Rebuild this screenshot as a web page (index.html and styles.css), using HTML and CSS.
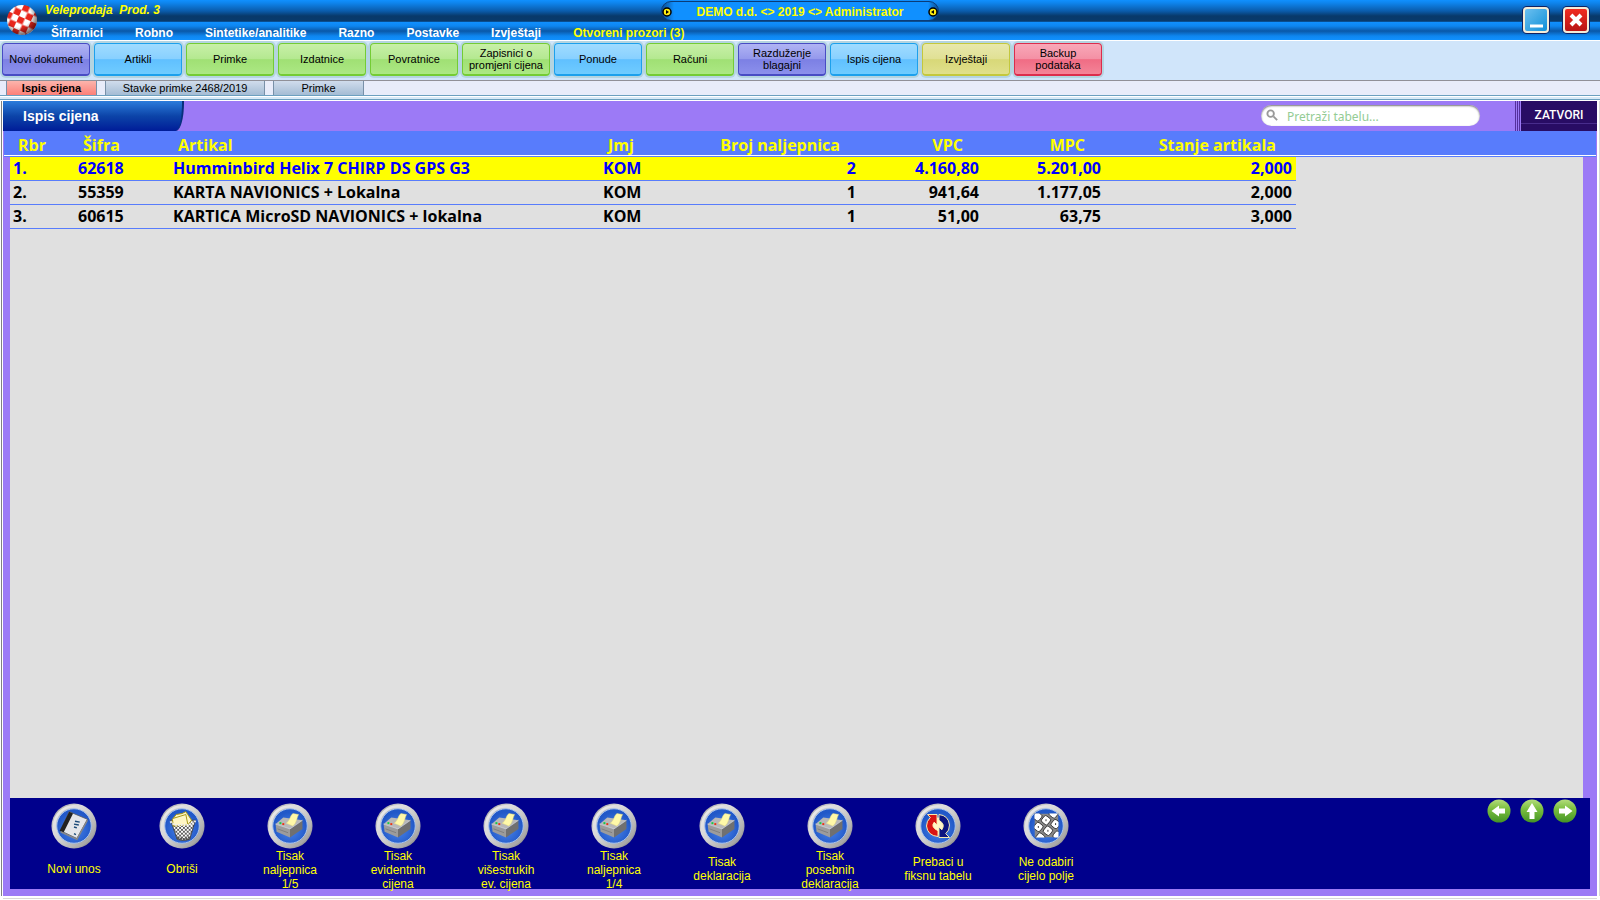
FILE: index.html
```
<!DOCTYPE html>
<html lang="hr">

	<head>
		<meta charset="UTF-8">
		<title>Veleprodaja</title>
		<link rel="stylesheet" href="styles.css">
	</head>

	<body>
		<!-- icons used more than once -->
		<svg class="defs" aria-hidden="true">
			<defs>
				<linearGradient id="ring" x1="0" y1="0" x2="1" y2="1">
					<stop offset="0" stop-color="#8f8f8f"/>
					<stop offset=".35" stop-color="#dedede"/>
					<stop offset=".7" stop-color="#b4b4b4"/>
					<stop offset="1" stop-color="#7c7c7c"/>
				</linearGradient>
				<linearGradient id="rim" x1="0" y1="0" x2="1" y2="1">
					<stop offset="0" stop-color="#f0f0f0"/>
					<stop offset=".5" stop-color="#d0d0d0"/>
					<stop offset="1" stop-color="#989898"/>
				</linearGradient>
				<radialGradient id="disc" cx=".5" cy=".6">
					<stop offset="0" stop-color="#4c86ea"/>
					<stop offset="1" stop-color="#2158c8"/>
				</radialGradient>
				<radialGradient id="shade" cx=".4" cy=".35" r=".65">
					<stop offset=".6" stop-color="#000" stop-opacity="0"/>
					<stop offset="1" stop-color="#200" stop-opacity=".6"/>
				</radialGradient>
				<linearGradient id="green" x1="0" y1="0" x2="0" y2="1">
					<stop offset="0" stop-color="#b4dc7c"/>
					<stop offset=".4" stop-color="#7cc040"/>
					<stop offset="1" stop-color="#449424"/>
				</linearGradient>
				<pattern id="mesh" width="4" height="4" patternUnits="userSpaceOnUse">
					<rect width="4" height="4" fill="#fff"/>
					<path d="M0 0l4 4M4 0l-4 4" stroke="#333" stroke-width=".8"/>
				</pattern>
				<pattern id="checks" width="13" height="13" patternUnits="userSpaceOnUse" patternTransform="translate(13 12) rotate(24)">
					<rect width="13" height="13" fill="#fff"/>
					<path d="M0 0h6.500v6.500H0zM6.500 6.500H13V13H6.500z" fill="#e8261c"/>
				</pattern>
				<clipPath id="keys"><rect x="12" y="11" width="25" height="25"/></clipPath>
				<g id="plate">
					<circle cx="24" cy="24" r="23.500" fill="url(#ring)"/>
					<circle cx="24" cy="24" r="20.500" fill="none" stroke="url(#rim)" stroke-width="3"/>
					<circle cx="24" cy="24" r="18" fill="url(#disc)" stroke="#a8c4f0"/>
				</g>
				<g id="printer">
					<use href="#plate"/>
					<path d="M9 22l8-7 20 3-13 9z" fill="#b8b8b8"/>
					<path d="M9 22l15 5v9L10 30z" fill="#9c9c9c"/>
					<path d="M24 27l13-9v9l-13 9z" fill="#707070"/>
					<path d="M9 22l15 5 13-9" fill="none" stroke="#d8d8d8" stroke-width=".8"/>
					<path d="M11 27l11 4" stroke="#777" stroke-width=".8"/>
					<path d="M20 21c4-2 4-8 7-10l6 1c-2 3-2 9-6 12z" fill="#fff9a8" stroke="#e4dc80" stroke-width=".5"/>
					<path d="M13 21h2" stroke="#1c4" stroke-width="2"/>
					<path d="M16 22h2" stroke="#e31" stroke-width="2"/>
				</g>
			</defs>
		</svg>

		<header class="topbar">
			<svg class="logo" viewBox="0 0 32 32">
				<circle cx="16" cy="16" r="15" fill="url(#checks)"/>
				<circle cx="16" cy="16" r="15" fill="url(#shade)"/>
			</svg>
			<div class="brand">Veleprodaja&nbsp; Prod. 3</div>
			<div class="company">
				<svg class="knob" viewBox="0 0 10 10"><circle cx="5" cy="5" r="4" fill="#fe1" stroke="#000" stroke-width="1.500"/><path d="M4 3l3 2-3 2z"/></svg>
				<span>DEMO d.d. &lt;&gt; 2019 &lt;&gt; Administrator</span>
				<svg class="knob" viewBox="0 0 10 10"><circle cx="5" cy="5" r="4" fill="#fe1" stroke="#000" stroke-width="1.500"/><path d="M6 3L3 5l3 2z"/></svg>
			</div>
			<nav class="menu">
				<a href="#">Šifrarnici</a>
				<a href="#">Robno</a>
				<a href="#">Sintetike/analitike</a>
				<a href="#">Razno</a>
				<a href="#">Postavke</a>
				<a href="#">Izvještaji</a>
				<a href="#" class="opened">Otvoreni prozori (3)</a>
			</nav>
			<div class="window-buttons">
				<button class="win minimize" aria-label="Minimize"><svg viewBox="0 0 20 20"><path d="M4 16h13" stroke="#fff" stroke-width="3"/></svg></button>
				<button class="win close" aria-label="Close"><svg viewBox="0 0 20 20"><path d="M5 5l10 10M15 5L5 15" stroke="#fff" stroke-width="4"/></svg></button>
			</div>
		</header>

		<div class="toolbar">
			<button class="tool violet">Novi dokument</button>
			<button class="tool blue">Artikli</button>
			<button class="tool green">Primke</button>
			<button class="tool green">Izdatnice</button>
			<button class="tool green">Povratnice</button>
			<button class="tool green">Zapisnici o<br>promjeni cijena</button>
			<button class="tool blue">Ponude</button>
			<button class="tool green">Računi</button>
			<button class="tool violet">Razduženje<br>blagajni</button>
			<button class="tool blue">Ispis cijena</button>
			<button class="tool yellow">Izvještaji</button>
			<button class="tool red">Backup<br>podataka</button>
		</div>

		<div class="tabs">
			<button class="tab active">Ispis cijena</button>
			<button class="tab wide">Stavke primke 2468/2019</button>
			<button class="tab">Primke</button>
		</div>

		<main class="panel">
			<div class="panel-head">
				<h1>Ispis cijena</h1>
				<label class="search">
					<svg viewBox="0 0 14 14" aria-hidden="true"><circle cx="5" cy="5" r="3.500" fill="none" stroke="#999" stroke-width="2"/><path d="M8 8l4 4" stroke="#999" stroke-width="2"/></svg>
					<input type="text" placeholder="Pretraži tabelu..." aria-label="Pretraži tabelu">
				</label>
				<button class="exit">ZATVORI</button>
			</div>

			<div class="grid">
				<table>
					<colgroup>
						<col class="c-rbr"><col class="c-sifra"><col class="c-artikal"><col class="c-jmj">
						<col class="c-broj"><col class="c-vpc"><col class="c-mpc"><col class="c-stanje">
					</colgroup>
					<thead>
						<tr>
							<th>Rbr</th>
							<th>Šifra</th>
							<th>Artikal</th>
							<th>Jmj</th>
							<th class="num">Broj naljepnica</th>
							<th class="num">VPC</th>
							<th class="num">MPC</th>
							<th class="num">Stanje artikala</th>
						</tr>
					</thead>
					<tbody>
						<tr class="selected">
							<td>1.</td>
							<td>62618</td>
							<td>Humminbird Helix 7 CHIRP DS GPS G3</td>
							<td>KOM</td>
							<td class="num">2</td>
							<td class="num">4.160,80</td>
							<td class="num">5.201,00</td>
							<td class="num">2,000</td>
						</tr>
						<tr>
							<td>2.</td>
							<td>55359</td>
							<td>KARTA NAVIONICS + Lokalna</td>
							<td>KOM</td>
							<td class="num">1</td>
							<td class="num">941,64</td>
							<td class="num">1.177,05</td>
							<td class="num">2,000</td>
						</tr>
						<tr>
							<td>3.</td>
							<td>60615</td>
							<td>KARTICA MicroSD NAVIONICS + lokalna</td>
							<td>KOM</td>
							<td class="num">1</td>
							<td class="num">51,00</td>
							<td class="num">63,75</td>
							<td class="num">3,000</td>
						</tr>
					</tbody>
				</table>
			</div>

			<footer class="actions">
				<button class="action">
					<svg viewBox="0 0 48 48"><use href="#plate"/><path d="M19 9l19 8-11 20-17-8z" fill="#e4e6ea" stroke="#555" stroke-width=".8"/><path d="M19 9l4 2-10 20-4-2z" fill="#222"/><path d="M10 30l17 8 11-20" fill="none" stroke="#888" stroke-width="1.500"/><path d="M25 19l5 1M24 22l5 1M24 25l3 1M24 32l2 1" stroke="#1a4a78" stroke-width="1.500"/></svg>
					<span>Novi unos</span>
				</button>
				<button class="action">
					<svg viewBox="0 0 48 48"><use href="#plate"/><path d="M12 18h26l-6 20q-7 2-13 0z" fill="url(#mesh)" stroke="#333" stroke-width=".8"/><path d="M14 17l4-5 6-1 4-2 2 3 4 6-4 5-15 1z" fill="#fff6c4" stroke="#a69410"/><path d="M15 16l13-4 2 10" fill="none" stroke="#a69410"/><path d="M12 19q2 4 8 4h10q7-1 8-5" fill="none" stroke="#eee" stroke-width="2" stroke-dasharray="2 1"/><path d="M19 36q7 4 13 0" stroke="#555" stroke-width="3" fill="none" stroke-dasharray="2 1"/></svg>
					<span>Obriši</span>
				</button>
				<button class="action">
					<svg viewBox="0 0 48 48"><use href="#printer"/></svg>
					<span>Tisak<br>naljepnica<br>1/5</span>
				</button>
				<button class="action">
					<svg viewBox="0 0 48 48"><use href="#printer"/></svg>
					<span>Tisak<br>evidentnih<br>cijena</span>
				</button>
				<button class="action">
					<svg viewBox="0 0 48 48"><use href="#printer"/></svg>
					<span>Tisak<br>višestrukih<br>ev. cijena</span>
				</button>
				<button class="action">
					<svg viewBox="0 0 48 48"><use href="#printer"/></svg>
					<span>Tisak<br>naljepnica<br>1/4</span>
				</button>
				<button class="action">
					<svg viewBox="0 0 48 48"><use href="#printer"/></svg>
					<span>Tisak<br>deklaracija</span>
				</button>
				<button class="action">
					<svg viewBox="0 0 48 48"><use href="#printer"/></svg>
					<span>Tisak<br>posebnih<br>deklaracija</span>
				</button>
				<button class="action">
					<svg viewBox="0 0 48 48"><use href="#plate"/><circle cx="24" cy="24" r="9" fill="#fff6c8"/><path d="M13 12h10v11l-3-3q-4 5 4 9v6q-11-1-12-11 0-5 4-9z" fill="#d81414" stroke="#fff0b0"/><path d="M25 12q10 1 11 11 0 6-4 9l4 4H25V25l3 3q4-6-3-10z" fill="#0c1480" stroke="#fff0b0"/></svg>
					<span>Prebaci u<br>fiksnu tabelu</span>
				</button>
				<button class="action">
					<svg viewBox="0 0 48 48"><use href="#plate"/><g clip-path="url(#keys)"><rect x="12" y="11" width="25" height="25" fill="#888"/><g fill="#fff" stroke="#222" stroke-width=".8"><rect x="11" y="10" width="8" height="8" rx="2" transform="rotate(38 15 14)"/><rect x="20" y="14" width="8" height="8" rx="2" transform="rotate(38 24 18)"/><rect x="28" y="7" width="8" height="8" rx="2" transform="rotate(38 32 11)"/><rect x="12" y="21" width="8" height="8" rx="2" transform="rotate(38 16 25)"/><rect x="22" y="25" width="8" height="8" rx="2" transform="rotate(38 26 29)"/><rect x="30" y="18" width="8" height="8" rx="2" transform="rotate(38 34 22)"/><rect x="32" y="30" width="8" height="8" rx="2" transform="rotate(38 36 34)"/><rect x="14" y="32" width="8" height="8" rx="2" transform="rotate(38 18 36)"/></g><path d="M24 17v2M16 24v2M26 28v2M34 21v2" stroke="#333"/></g></svg>
					<span>Ne odabiri<br>cijelo polje</span>
				</button>
				<div class="arrows">
					<button class="arrow" aria-label="Lijevo"><svg viewBox="0 0 24 24"><circle cx="12" cy="12" r="11.500" fill="url(#green)"/><path d="M4.500 12L12 6.500v3h6v5h-6v3z" fill="#fff"/></svg></button>
					<button class="arrow" aria-label="Gore"><svg viewBox="0 0 24 24"><circle cx="12" cy="12" r="11.500" fill="url(#green)"/><path d="M12 4l5.500 9h-3v7h-5v-7h-3z" fill="#fff"/></svg></button>
					<button class="arrow" aria-label="Desno"><svg viewBox="0 0 24 24"><circle cx="12" cy="12" r="11.500" fill="url(#green)"/><path d="M19.500 12L12 6.500v3H6v5h6v3z" fill="#fff"/></svg></button>
				</div>
			</footer>
		</main>
	</body>

</html>
```
FILE: styles.css
```
* {
	margin: 0;
	padding: 0;
	box-sizing: border-box;
}

body {
	display: flex;
	flex-direction: column;
	height: 100vh;
	background: #fff;
	font: 12px "Liberation Sans", Arial, sans-serif;
	overflow: hidden;
}

button {
	border: none;
	background: none;
	font: inherit;
}

svg {
	display: block;
}

.defs {
	position: absolute;
	width: 0;
	height: 0;
}

/* title bar + menu */
.topbar {
	display: grid;
	grid-template-columns: 1fr 278px 1fr;
	grid-template-rows: 22px 18px;
	flex: none;
	background:
		linear-gradient(#1090ff, #0e84ec 3px, #0a5cac 11px, #08396a 16px, #083a6c 21px, #0c60b0) 0 0 / 100% 22px no-repeat,
		linear-gradient(#1090ff, #0e86f0 4px, #0a58a8 9px, #0e86f0 14px, #1090ff) 0 22px / 100% 18px no-repeat;
	font-weight: bold;
}

.logo {
	grid-area: 1 / 1 / 3 / 2;
	width: 32px;
	height: 32px;
	margin: 4px 6px;
}

.brand {
	grid-area: 1 / 1;
	padding: 3px 0 0 45px;
	color: #ff0;
	font-style: italic;
	line-height: 14px;
}

.company {
	grid-area: 1 / 2;
	display: flex;
	align-items: center;
	justify-content: space-between;
	height: 20px;
	margin-top: 1px;
	padding-top: 1px;
	background: linear-gradient(90deg, #0a4c90, #1090ff 12px, #1090ff 266px, #0a4c90);
	border: 1px solid #0a3c78;
	border-radius: 10px;
	color: #ff0;
}

.knob {
	width: 10px;
	height: 10px;
}

.menu {
	grid-area: 2 / 1 / 3 / 4;
	display: flex;
	gap: 32px;
	padding-left: 51px;
	line-height: 22px;
}

.menu a {
	color: #fff;
	text-decoration: none;
}

.menu .opened {
	color: #ff0;
}

.window-buttons {
	grid-area: 1 / 3 / 3 / 4;
	justify-self: end;
	display: flex;
	gap: 14px;
	padding: 7px 11px 0 0;
}

.win {
	width: 26px;
	height: 26px;
	padding: 1px;
	border: 2px solid #f4ecd8;
	border-radius: 4px;
	box-shadow: 0 0 0 1px #102060;
}

.minimize {
	background: linear-gradient(135deg, #6cc0f0, #1090d8);
}

.close {
	background: linear-gradient(#f02c20, #b81414);
}

/* toolbar */
.toolbar {
	display: flex;
	gap: 4px;
	flex: none;
	height: 41px;
	padding: 2px 2px 0;
	background: #d0e5fa;
	border-top: 1px solid #fff;
	border-bottom: 1px solid #909098;
}

.tool {
	width: 88px;
	height: 33px;
	border: 1px solid;
	border-bottom-width: 2px;
	border-radius: 4px;
	box-shadow: 0 0 0 2px #b4d4e0;
	font-size: 11px;
	line-height: 12px;
	white-space: nowrap;
}

.violet {
	background: linear-gradient(#b0b4f4, #9498ec 50%, #7c80e4 52%, #8c90ec);
	border-color: #484cc4;
}

.blue {
	background: linear-gradient(#a0dcff, #88d0ff 50%, #60c0ff 52%, #70ccff);
	border-color: #1ca0ec;
}

.green {
	background: linear-gradient(#c8f0a8, #b4e890 50%, #a0e074 52%, #ace884);
	border-color: #74cc34;
}

.yellow {
	background: linear-gradient(#e8e8ac, #e0e094 50%, #d8d878 52%, #e0e08c);
	border-color: #c4c83c;
}

.red {
	background: linear-gradient(#f8a8b8, #f490a4 50%, #f06c84 52%, #f48498);
	border-color: #dc2c4c;
}

/* open windows */
.tabs {
	display: flex;
	gap: 8px;
	flex: none;
	height: 20px;
	padding: 0 6px 5px;
	background: linear-gradient(#e8ecfa 14px, #6ca0c0 14px, #6ca0c0 15px, #fff 15px, #fff 16px, #d8eaf8 16px, #d8eaf8 18px, #6ca0c0 18px, #6ca0c0 19px, #fff 19px);
}

.tab {
	width: 91px;
	height: 14px;
	border: solid #7890a8;
	border-width: 0 1px;
	background: linear-gradient(#d0dcec, #a4bcd4);
	font-size: 11px;
	line-height: 14px;
}

.tab.wide {
	width: 160px;
}

.tab.active {
	background: linear-gradient(#fcb4ac, #fc8078);
	font-weight: bold;
}

/* window */
.panel {
	display: flex;
	flex-direction: column;
	flex: 1;
	min-height: 0;
	margin: 0 3px 4px;
	padding-bottom: 7px;
	background: #9c7af6;
	box-shadow: -1px 0 #fff, -2px 0 #808080, 2px 0 #fff, 3px 0 #d8d8d8, 0 2px #fff, 0 3px #d8d8d8;
}

.panel-head {
	display: flex;
	flex: none;
	height: 30px;
}

.panel-head h1 {
	width: 181px;
	padding-left: 20px;
	margin-right: auto;
	background: linear-gradient(#2c7cdc, #0c44a8 50%, #001c98);
	border-right: 2px solid #08307c;
	border-radius: 0 0 8px 0 / 0 0 28px 0;
	color: #fff;
	font-size: 14px;
	line-height: 30px;
}

.search {
	display: flex;
	align-items: center;
	gap: 8px;
	width: 219px;
	height: 21px;
	margin: 4px 35px 0 0;
	padding: 0 5px;
	border-radius: 11px;
	background: #fff;
	box-shadow: inset 0 1px 2px #777;
}

.search svg {
	width: 13px;
	height: 13px;
	flex: none;
}

.search input {
	width: 100%;
	padding-top: 2px;
	border: none;
	outline: none;
	background: none;
	font: 12px "Noto Sans", sans-serif;
}

.search input::placeholder {
	color: #94cc94;
	opacity: 1;
}

.exit {
	width: 82px;
	padding: 0 0 3px 6px;
	background:
		linear-gradient(90deg, #54309c 1px, #9c7af6 1px, #9c7af6 2px, #54309c 2px, #54309c 3px, #9c7af6 3px, #9c7af6 4px, #54309c 4px, #54309c 5px, #9c7af6 5px) 0 0 / 6px 100% no-repeat,
		linear-gradient(#280c64 22px, #482c8c 22px, #482c8c 23px, #280c64 23px);
	color: #fff;
	font: 500 12px Roboto, sans-serif;
}

/* header stripe runs over the whole width, the rows sit on the grey field */
.grid {
	flex: 1;
	min-height: 0;
	margin: 0 1px;
	padding-left: 6px;
	background:
		linear-gradient(#587cfc 24px, #fff 24px, #fff 25px, #587cfc 25px) 0 0 / 100% 26px no-repeat,
		linear-gradient(#e0e0e0, #e0e0e0) 6px 0 / calc(100% - 19px) 100% no-repeat;
}

table {
	width: 1286px;
	table-layout: fixed;
	border-collapse: separate;
	border-spacing: 0;
	font: bold 16px "Open Sans", "Noto Sans", sans-serif;
	line-height: 23px;
}

.c-rbr { width: 65px; }
.c-sifra { width: 95px; }
.c-artikal { width: 430px; }
.c-jmj { width: 108px; }
.c-broj { width: 152px; }
.c-vpc { width: 123px; }
.c-mpc { width: 122px; }
.c-stanje { width: 191px; }

th {
	height: 26px;
	padding: 3px 20px 0 8px;
	color: #ff0;
	text-align: left;
	white-space: nowrap;
}

td {
	height: 24px;
	padding: 0 4px 0 3px;
	border-bottom: 1px solid #587cfc;
	white-space: nowrap;
}

.num {
	text-align: right;
}

.selected {
	background: #ff0;
	color: #00f;
}

/* bottom bar */
.actions {
	display: flex;
	flex: none;
	height: 91px;
	margin: 0 7px;
	padding: 5px 13px 0 10px;
	background: #00008c;
}

.action {
	display: flex;
	flex-direction: column;
	align-items: center;
	width: 108px;
	height: 86px;
	color: #ff0;
	line-height: 14px;
}

.action svg {
	flex: none;
	width: 46px;
	height: 46px;
}

.action span {
	display: flex;
	align-items: center;
	height: 42px;
	text-align: center;
}

.arrows {
	display: flex;
	gap: 9px;
	height: 24px;
	margin: -4px 0 0 auto;
}

.arrow svg {
	width: 24px;
	height: 24px;
}
```
